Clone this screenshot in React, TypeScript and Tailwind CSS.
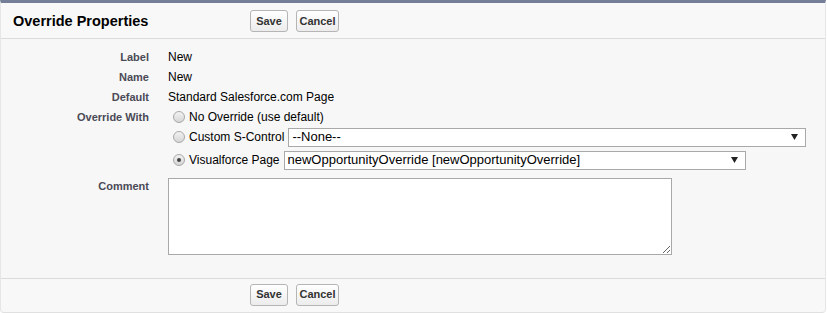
import React from "react";

function Btn({ label, w }: { label: string; w: string }) {
  return (
    <button className={`${w} h-[22px] rounded-[3px] border border-[#b5b5b5] bg-gradient-to-b from-white to-[#ececec] text-[11px] font-bold text-[#333] leading-none`}>
      {label}
    </button>
  );
}

function Radio({ checked }: { checked?: boolean }) {
  return (
    <span className="w-[12px] h-[12px] rounded-full border border-[#a8a8a8] bg-gradient-to-b from-[#f2f2f2] to-[#d6d6d6] flex items-center justify-center shrink-0">
      {checked && <span className="w-[4px] h-[4px] rounded-full bg-[#444]" />}
    </span>
  );
}

function Select({ value, width }: { value: string; width: string }) {
  return (
    <div className={`${width} h-[19px] bg-white border border-[#a9a9a9] flex items-center justify-between pl-[3px] pr-[7px] text-[13px] text-black`}>
      <span>{value}</span>
      <svg width="7" height="6" viewBox="0 0 7 6">
        <path d="M0 0 H7 L3.5 6 Z" fill="#222" />
      </svg>
    </div>
  );
}

function Row({ label, children, h = "h-[20px]" }: { label: string; children: React.ReactNode; h?: string }) {
  return (
    <div className={`flex ${h}`}>
      <div className="w-[148px] text-right text-[11px] font-bold text-[#4a4a56] pt-[3px] shrink-0">{label}</div>
      <div className="ml-[19px] flex-1 text-[12px] text-black pt-[2px]">{children}</div>
    </div>
  );
}

export default function App() {
  return (
    <div className="w-[827px] h-[313px] bg-white" style={{ fontFamily: '"Liberation Sans", Arial, sans-serif' }}>
      <div className="w-[826px] h-[313px] bg-[#f8f8f8] border-t-[3px] border-t-[#747e96] border-x border-b border-x-[#e6e6e6] border-b-[#e0e0e0] rounded-b-[4px] flex flex-col">
        {/* header */}
        <div className="h-[36px] flex items-center border-b border-[#dbdbdb] shrink-0">
          <h2 className="w-[249px] pl-[12px] pt-[3px] text-[14.5px] font-bold text-black">Override Properties</h2>
          <div className="flex gap-[8px] pt-[1px]">
            <Btn label="Save" w="w-[38px]" />
            <Btn label="Cancel" w="w-[43px]" />
          </div>
        </div>

        {/* body */}
        <div className="flex-1 bg-[#f7f7f7] pt-[7px]">
          <Row label="Label">New</Row>
          <Row label="Name">New</Row>
          <Row label="Default">Standard Salesforce.com Page</Row>
          <Row label="Override With" h="h-[65px]">
            <div className="flex flex-col">
              <div className="h-[19px] flex items-center gap-[4px] pl-[5px] -mt-[1px]">
                <Radio />
                <span>No Override (use default)</span>
              </div>
              <div className="h-[22px] flex items-center gap-[4px] pl-[5px]">
                <Radio />
                <span>Custom S-Control</span>
                <Select value="--None--" width="w-[518px]" />
              </div>
              <div className="h-[24px] flex items-center gap-[4px] pl-[5px]">
                <Radio checked />
                <span>Visualforce Page</span>
                <Select value="newOpportunityOverride [newOpportunityOverride]" width="w-[462px]" />
              </div>
            </div>
          </Row>
          <div className="flex mt-[7px]">
            <div className="w-[148px] text-right text-[11px] font-bold text-[#4a4a56] shrink-0">Comment</div>
            <textarea className="ml-[19px] w-[504px] h-[77px] bg-white border border-[#a9a9a9] resize" />
          </div>
        </div>

        {/* footer */}
        <div className="h-[34px] border-t border-[#dbdbdb] flex items-center pl-[249px] gap-[8px] shrink-0 pb-[2px]">
          <Btn label="Save" w="w-[38px]" />
          <Btn label="Cancel" w="w-[43px]" />
        </div>
      </div>
    </div>
  );
}
